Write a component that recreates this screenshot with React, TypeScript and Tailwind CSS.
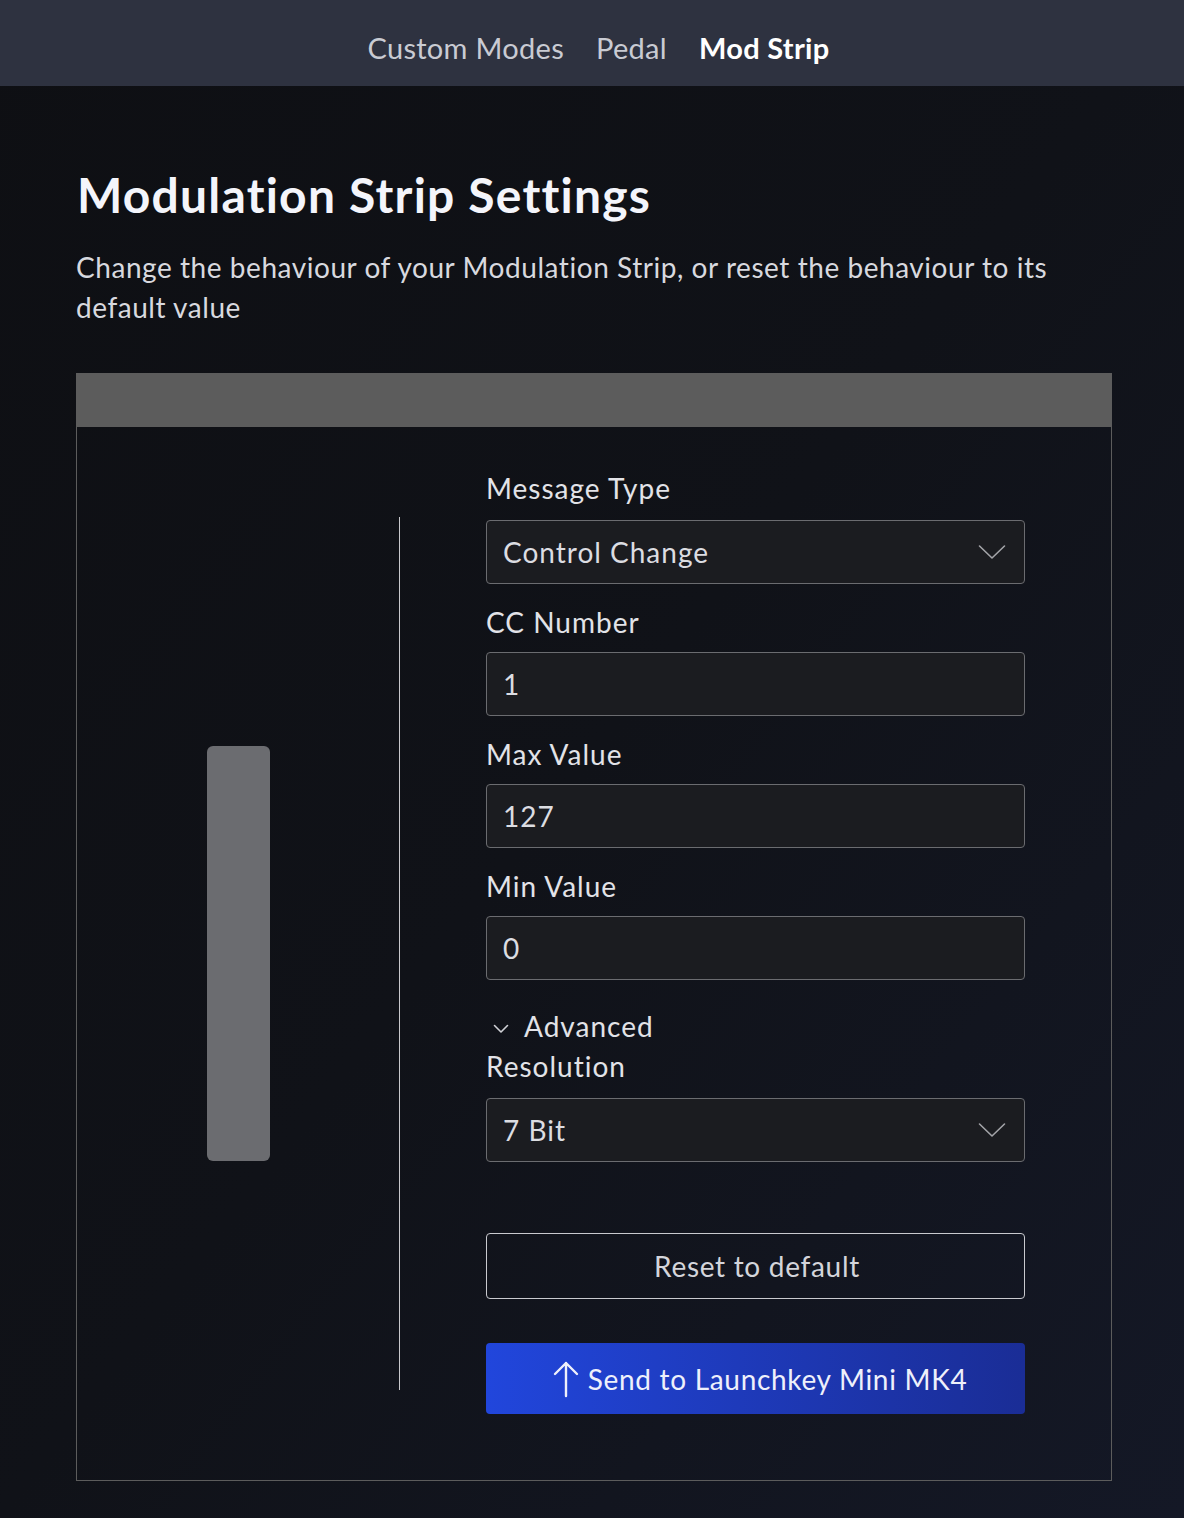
import React from "react";

const font = { fontFamily: "Lato, 'Noto Sans', sans-serif" };

function Chevron({ className = "" }: { className?: string }) {
  return (
    <svg className={className} width="28" height="16" viewBox="0 0 28 16" fill="none">
      <path d="M1.5 2 L14 14 L26.5 2" stroke="#a3a4a8" strokeWidth="1.6" strokeLinecap="round" strokeLinejoin="round" />
    </svg>
  );
}

function Label({ children, first = false }: { children: React.ReactNode; first?: boolean }) {
  return (
    <div className={`${first ? "mb-[14px]" : "mt-[20px] mb-[12px]"} h-[36px] leading-[36px] text-[28px] tracking-[1px] text-[#e2e3e8]`}>{children}</div>
  );
}

function Box({ value, select = false }: { value: string; select?: boolean }) {
  return (
    <div className="h-[64px] rounded-[4px] border border-[#6b6c70] bg-[#1b1c20] flex items-center justify-between pl-[16px] pr-[18px]">
      <span className="text-[28px] tracking-[1px] text-[#dcdde2]">{value}</span>
      {select && <Chevron />}
    </div>
  );
}

export default function App() {
  return (
    <div style={font} className="min-h-[1518px] w-full bg-gradient-to-br from-[#0e0f13] via-[#101218] to-[#141826] text-white">
      <header className="h-[86px] bg-[#2e3240] flex items-center justify-center gap-[32px] pt-[10px] pl-[13px]">
        <span className="text-[29px] tracking-[0.3px] text-[#c9cbd3]">Custom Modes</span>
        <span className="text-[29px] tracking-[0.3px] text-[#c9cbd3]">Pedal</span>
        <span className="text-[29px] tracking-[0.3px] font-bold text-white">Mod Strip</span>
      </header>

      <main className="pl-[76px] pr-[72px]">
        <h1 className="pt-[77px] text-[48px] font-bold leading-[64px] tracking-[1.2px] text-[#f4f5fb] pl-[1px]">Modulation Strip Settings</h1>
        <p className="mt-[20px] text-[28px] leading-[40px] tracking-[0.55px] text-[#d8d9df] max-w-[1000px]">
          Change the behaviour of your Modulation Strip, or reset the behaviour to its default value
        </p>

        <section className="mt-[46px] w-[1036px] border border-[#5c5c5c]">
          <div className="h-[53px] bg-[#5c5c5c]" />
          <div className="flex">
            <div className="w-[323px] my-[90px] border-r border-[#c8c8cc] flex items-center justify-center">
              <div className="w-[63px] h-[415px] rounded-[6px] bg-[#6b6c70]" />
            </div>
            <div className="flex-1 px-[86px] pt-[43px] pb-[66px]">
              <Label first>Message Type</Label>
              <Box value="Control Change" select />
              <Label>CC Number</Label>
              <Box value="1" />
              <Label>Max Value</Label>
              <Box value="127" />
              <Label>Min Value</Label>
              <Box value="0" />

              <div className="mt-[28px] h-[36px] flex items-center gap-[15px] text-[28px] tracking-[1px] text-[#e2e3e8]">
                <svg width="16" height="10" viewBox="0 0 16 10" fill="none" className="ml-[7px] mt-[6px]">
                  <path d="M1.5 1.5 L8 8 L14.5 1.5" stroke="#d0d1d6" strokeWidth="1.6" strokeLinecap="round" strokeLinejoin="round" />
                </svg>
                <span>Advanced</span>
              </div>
              <div className="mt-[4px] mb-[14px] h-[36px] leading-[36px] text-[28px] tracking-[1px] text-[#e2e3e8]">Resolution</div>
              <Box value="7 Bit" select />

              <button className="mt-[71px] w-full h-[66px] rounded-[4px] border border-[#c9cacf] bg-transparent text-[28px] tracking-[0.7px] text-[#d4d5db] flex items-center justify-center pl-[3px]">
                Reset to default
              </button>

              <button className="mt-[44px] w-full h-[71px] rounded-[4px] bg-gradient-to-r from-[#2146dc] to-[#1a2d96] text-[28px] tracking-[0.7px] text-[#eef0fb] flex items-center justify-center gap-[8px] pl-[8px]">
                <svg width="28" height="38" viewBox="0 0 28 38" fill="none">
                  <path d="M14 36 V3 M3 14 L14 3 L25 14" stroke="#eef0fb" strokeWidth="2.4" strokeLinecap="round" strokeLinejoin="round" />
                </svg>
                <span>Send to Launchkey Mini MK4</span>
              </button>
            </div>
          </div>
        </section>
      </main>
    </div>
  );
}
